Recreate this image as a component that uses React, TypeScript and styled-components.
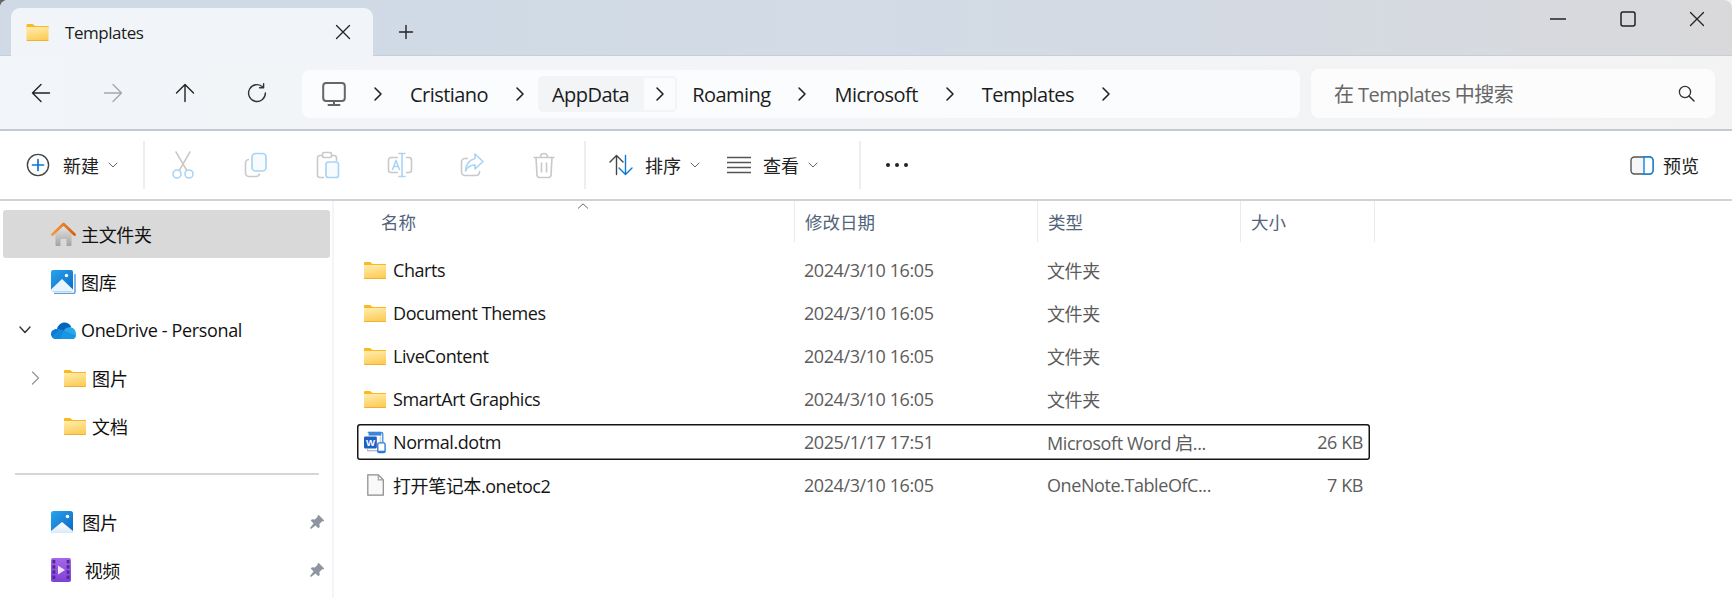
import React from "react";
import styled, { createGlobalStyle } from "styled-components";

const FONT = `"Open Sans", "Noto Sans CJK SC", sans-serif`;

const Global = createGlobalStyle`
  html, body { margin: 0; padding: 0; width: 1732px; height: 598px; overflow: hidden;
    background: linear-gradient(90deg, #666 50%, #f2f2f2 50%); }
  * { box-sizing: border-box; }
`;

const Win = styled.div`
  width: 1732px; height: 598px; overflow: hidden; display: flex; flex-direction: column;
  border-radius: 8px 8px 0 0; background: #fff; font-family: ${FONT}; color: #1a1a1a;
`;

/* ---------- title bar ---------- */
const TitleBar = styled.header`
  height: 56px; flex: none; display: flex; align-items: flex-end; padding-left: 11px;
  background: linear-gradient(90deg, #cfdae6 0%, #d2dbe6 50%, #d5dae2 75%, #d9d9db 100%);
  border-bottom: 1px solid #c6ced8;
`;
const Tab = styled.div`
  width: 362px; height: 48px; margin-bottom: -1px; display: flex; align-items: center; padding: 0 22px 0 15px;
  background: #f1f5f9; border-radius: 9px 9px 0 0; position: relative;
`;
const TabLabel = styled.span`
  margin-left: 16px; font-size: 17px; font-weight: 500; letter-spacing: -0.45px; flex: 1; color: #1c1c1c;
`;
const NewTab = styled.div`
  width: 66px; height: 47px; display: flex; align-items: center; justify-content: center; margin-left: 0;
`;
const WinControls = styled.div`
  margin-left: auto; align-self: flex-start; display: flex; height: 38px; padding-right: 0;
`;
const WinBtn = styled.div`
  width: 69.5px; display: flex; align-items: center; justify-content: center;
`;

/* ---------- nav bar ---------- */
const NavBar = styled.nav`
  height: 75px; flex: none; display: flex; align-items: flex-start; padding: 13px 17px 0 5px;
  background: linear-gradient(90deg, #f2f5f9, #f3f3f4);
  border-bottom: 2px solid #c4c9d0;
`;
const NavBtn = styled.div`
  width: 72px; height: 48px; display: flex; align-items: center; justify-content: center;
`;
const Address = styled.div`
  margin-left: 9px; margin-top: 1px; width: 998px; height: 48px; display: flex; align-items: center; padding-left: 20px;
  background: #fbfcfd; border-radius: 8px; font-size: 20px; letter-spacing: -0.55px;
`;
const Crumb = styled.span`
  color: #1c1c1c; white-space: nowrap;
`;
const Sep = styled.span`
  display: flex; width: 10px; margin: 0 27px;
`;
const ActiveCrumb = styled.div`
  display: flex; align-items: stretch; height: 36px; margin-left: -14px; margin-right: 15px;
`;
const ActiveLabel = styled.span`
  display: flex; align-items: center; padding: 0 15px 0 14px; background: #f2f4f6; border-radius: 5px 0 0 5px; color: #1c1c1c;
`;
const ActiveChevron = styled.span`
  display: flex; align-items: center; justify-content: center; width: 33px;
  background: #fbfcfd; border: 2px solid #f2f4f6; border-left: none; border-radius: 0 5px 5px 0;
`;
const Search = styled.div`
  margin-left: 11px; width: 404px; height: 49px; display: flex; align-items: center; padding: 0 20px 0 23px;
  background: #fcfcfc; border-radius: 8px; font-size: 20px; color: #666; letter-spacing: -0.55px;
`;
const SearchText = styled.span`flex: 1; white-space: nowrap;`;

/* ---------- command bar ---------- */
const CommandBar = styled.div`
  height: 70px; flex: none; display: flex; align-items: center; background: #fff;
  border-bottom: 2px solid #cfd2d6; padding-right: 33px;
`;
const Cmd = styled.div<{ $w: number }>`
  width: ${(p) => p.$w}px; height: 48px; display: flex; align-items: center; justify-content: center; flex: none;
`;
const LabelCmd = styled.div<{ $pl: number; $w: number }>`
  width: ${(p) => p.$w}px; padding-left: ${(p) => p.$pl}px; height: 48px; display: flex; align-items: center; flex: none; font-size: 18px; color: #222;
`;
const CmdText = styled.span<{ $ml: number }>`
  margin-left: ${(p) => p.$ml}px;
`;
const Caret = styled.span<{ $ml: number }>`
  margin-left: ${(p) => p.$ml}px; display: flex;
`;
const VRule = styled.div`
  width: 2px; height: 48px; background: #eeeeee; flex: none;
`;
const Preview = styled.div`
  margin-left: auto; display: flex; align-items: center; font-size: 18px; color: #222; gap: 9px;
`;

/* ---------- body ---------- */
const Body = styled.main`
  flex: 1; display: flex; min-height: 0;
`;
const Sidebar = styled.aside`
  width: 334px; flex: none; padding: 9px 0 0 3px; border-right: 2px solid #f4f5f7; background: #fff;
`;
const NavRow = styled.div<{ $active?: boolean }>`
  width: 327px; height: 48px; display: flex; align-items: center; font-size: 18px; color: #111;
  border-radius: 3px; background: ${(p) => (p.$active ? "#d9d9d9" : "transparent")};
  letter-spacing: -0.35px;
`;
const Indent = styled.span<{ $deep?: boolean }>`
  flex: none; display: flex; align-items: center; width: ${(p) => (p.$deep ? 61 : 48)}px;
  padding-left: ${(p) => (p.$deep ? 28 : 16)}px;
`;
const NavLabel = styled.span<{ $deep?: boolean }>`
  margin-left: ${(p) => (p.$deep ? 6 : 5)}px; letter-spacing: ${(p) => (p.$deep ? 0 : "inherit")};
`;
const Pin = styled.span`
  margin-left: auto; margin-right: 5px; display: flex;
`;
const Divider = styled.div`
  width: 304px; height: 2px; margin: 23px 0 23px 12px; background: #d6d6d6;
`;
const List = styled.section`flex: 1; min-width: 0;`;
const HeadRow = styled.div`
  height: 41px; display: grid; grid-template-columns: 460px 243px 203px 135px; width: 1041px;
  font-size: 17.5px; color: #52637a; position: relative; border-right: 1px solid #ebebeb;
`;
const HeadCell = styled.div<{ $first?: boolean }>`
  display: flex; align-items: center; padding-left: ${(p) => (p.$first ? 47 : 10)}px;
  border-left: ${(p) => (p.$first ? "none" : "1px solid #ebebeb")};
  position: relative;
`;
const SortCaret = styled.span`
  position: absolute; left: 243px; top: 2px; display: flex;
`;
const Rows = styled.div`padding-top: 10px; display: flex; flex-direction: column; gap: 7px;`;
const FileRow = styled.div<{ $sel?: boolean }>`
  margin-left: 23px; width: 1013px; height: 36px; display: grid; grid-template-columns: 437px 243px 203px 130px;
  align-items: center; border-radius: 3px; font-size: 18px;
  box-shadow: ${(p) => (p.$sel ? "inset 0 0 0 1.5px #151515" : "none")};
`;
const NameCell = styled.div`
  display: flex; align-items: center; padding-left: 7px; gap: 7px; color: #151515; letter-spacing: -0.42px; white-space: nowrap;
`;
const IconSlot = styled.span`
  width: 22px; display: flex; justify-content: center; flex: none;
`;
const DataCell = styled.div<{ $right?: boolean }>`
  padding: ${(p) => (p.$right ? "0 7px 0 0" : "0 0 0 10px")}; text-align: ${(p) => (p.$right ? "right" : "left")};
  color: #5c5c5c; letter-spacing: -0.42px; white-space: nowrap;
`;

/* ---------- icons ---------- */
const Stroke = { fill: "none", strokeLinecap: "round", strokeLinejoin: "round" } as const;

const Folder = ({ w = 22 }: { w?: number }) => (
  <svg width={w} height={17} viewBox="0 0 22 17">
    <defs>
      <linearGradient id="fo" x1="0" y1="0" x2="0.3" y2="1">
        <stop offset="0" stopColor="#ffeeb0" />
        <stop offset="1" stopColor="#fdcd5c" />
      </linearGradient>
    </defs>
    <path d="M0 1a1 1 0 0 1 1-1h5l2.6 2H22v3H0z" fill="#fbb91f" />
    <path d="M0 3h21.2a.8.8 0 0 1 .8.8V16a1 1 0 0 1-1 1H1a1 1 0 0 1-1-1z" fill="url(#fo)" />
    <path d="M0 16h22v.2a.8.8 0 0 1-.8.8H.8a.8.8 0 0 1-.8-.8z" fill="#efb22e" />
  </svg>
);

const Chevron = ({ c = "#222" }: { c?: string }) => (
  <svg width="10" height="16" viewBox="0 0 10 16">
    <path d="M2 2l6 6-6 6" stroke={c} strokeWidth="1.6" {...Stroke} />
  </svg>
);
const Down = ({ c = "#666" }: { c?: string }) => (
  <svg width="10" height="6" viewBox="0 0 10 6">
    <path d="M1 1l4 4 4-4" stroke={c} strokeWidth="1" {...Stroke} />
  </svg>
);
const Arrow = ({ dir, c = "#222" }: { dir: "l" | "r" | "u"; c?: string }) => {
  const rot = dir === "l" ? 0 : dir === "r" ? 180 : 90;
  return (
    <svg width="20" height="20" viewBox="0 0 20 20" style={{ transform: `rotate(${rot}deg)` }}>
      <path d="M1.5 10h17M10 1.5L1.5 10l8.5 8.5" stroke={c} strokeWidth="1.4" {...Stroke} />
    </svg>
  );
};
const Refresh = () => (
  <svg width="20" height="20" viewBox="0 0 20 20">
    <path d="M15.8 4A8.4 8.4 0 1 0 18.4 10" stroke="#333" strokeWidth="1.4" {...Stroke} />
    <path d="M16.6 0.8V4.8H12.6" stroke="#333" strokeWidth="1.4" {...Stroke} />
  </svg>
);
const Monitor = () => (
  <svg width="24" height="24" viewBox="0 0 24 24">
    <rect x="1.2" y="1" width="21.6" height="18" rx="3" fill="#fbfcfd" stroke="#666" strokeWidth="2" />
    <path d="M12 19v3.5M6.5 23h11" stroke="#666" strokeWidth="2" {...Stroke} />
  </svg>
);
const Plus = () => (
  <svg width="16" height="16" viewBox="0 0 16 16">
    <path d="M8 1.5v13M1.5 8h13" stroke="#222" strokeWidth="1.4" strokeLinecap="round" />
  </svg>
);
const Cross = ({ s = 16 }: { s?: number }) => (
  <svg width={s} height={s} viewBox="0 0 16 16">
    <path d="M1.5 1.5l13 13M14.5 1.5l-13 13" stroke="#222" strokeWidth="1.3" strokeLinecap="round" />
  </svg>
);
const Minimize = () => (
  <svg width="16" height="16" viewBox="0 0 16 16"><path d="M0 8h16" stroke="#222" strokeWidth="1.3" /></svg>
);
const Maximize = () => (
  <svg width="16" height="16" viewBox="0 0 16 16">
    <rect x="1" y="1" width="14" height="14" rx="2" fill="none" stroke="#222" strokeWidth="1.5" />
  </svg>
);
const SearchIcon = () => (
  <svg width="17" height="17" viewBox="0 0 17 17">
    <circle cx="7" cy="7" r="5.6" fill="none" stroke="#333" strokeWidth="1.3" />
    <path d="M11 11l5 5" stroke="#333" strokeWidth="1.5" strokeLinecap="round" />
  </svg>
);
const NewIcon = () => (
  <svg width="24" height="24" viewBox="0 0 24 24">
    <circle cx="12" cy="12" r="10.6" fill="#fff" stroke="#444" strokeWidth="1.4" />
    <path d="M12 6.5v11M6.5 12h11" stroke="#0a78d4" strokeWidth="1.7" strokeLinecap="round" />
  </svg>
);
const G = "#c9c9c9";
const B = "#a9d4f5";
const CutIcon = () => (
  <svg width="24" height="28" viewBox="0 0 24 28">
    <path d="M5 1l10.5 18M19 1L8.5 19" stroke={G} strokeWidth="1.5" {...Stroke} />
    <circle cx="6" cy="23" r="4" fill="none" stroke={B} strokeWidth="1.6" />
    <circle cx="18" cy="23" r="4" fill="none" stroke={B} strokeWidth="1.6" />
  </svg>
);
const CopyIcon = () => (
  <svg width="24" height="26" viewBox="0 0 24 26">
    <path d="M5 7.5A3.5 3.5 0 0 0 1.5 11v10A3.5 3.5 0 0 0 5 24.5h7a3.5 3.5 0 0 0 3.5-3" fill="none" stroke={G} strokeWidth="1.6" />
    <rect x="8" y="1.5" width="14" height="17.5" rx="3.5" fill="#f7fbfe" stroke={B} strokeWidth="1.7" />
  </svg>
);
const PasteIcon = () => (
  <svg width="24" height="28" viewBox="0 0 24 28">
    <path d="M6 4.5H4A2.5 2.5 0 0 0 1.5 7v17A2.5 2.5 0 0 0 4 26.5h4M16 4.5h2A2.5 2.5 0 0 1 20.5 7v3" fill="none" stroke={G} strokeWidth="1.6" />
    <rect x="6.5" y="1.5" width="9" height="5" rx="1.5" fill="#fff" stroke={G} strokeWidth="1.6" />
    <rect x="10" y="11" width="12.5" height="15.5" rx="2.5" fill="#f7fbfe" stroke={B} strokeWidth="1.7" />
  </svg>
);
const RenameIcon = () => (
  <svg width="26" height="26" viewBox="0 0 26 26">
    <path d="M11 5.5H4A2.5 2.5 0 0 0 1.5 8v10A2.5 2.5 0 0 0 4 20.5h7M19 5.5h3A2.5 2.5 0 0 1 24.500 8v10a2.500 2.500 0 0 1-2.500 2.500h-3" fill="none" stroke={G} strokeWidth="1.6" />
    <path d="M15 1.500v23M12 1.500h6M12 24.500h6" stroke={B} strokeWidth="1.6" strokeLinecap="round" />
    <path d="M5.500 17.500L9 8.500l3.500 9M6.700 14.500h4.600" fill="none" stroke={B} strokeWidth="1.5" {...Stroke} />
  </svg>
);
const ShareIcon = () => (
  <svg width="24" height="26" viewBox="0 0 24 26">
    <path d="M8 6.500H5A3.500 3.500 0 0 0 1.500 10v10A3.500 3.500 0 0 0 5 23.500h11a3.500 3.500 0 0 0 3.500-3V19" fill="none" stroke={G} strokeWidth="1.6" />
    <path d="M15 2l8 7.500-8 7.500v-4C10.500 13 7.500 14.500 5.500 19c.3-6.500 3.500-11 9.500-12.500z" fill="#f7fbfe" stroke={B} strokeWidth="1.6" {...Stroke} />
  </svg>
);
const TrashIcon = () => (
  <svg width="22" height="27" viewBox="0 0 22 27">
    <path d="M1 5.500h20M7.500 5.500C7.500 2 9 1.500 11 1.500s3.500.5 3.500 4" fill="none" stroke={G} strokeWidth="1.6" {...Stroke} />
    <path d="M3 5.500l1 18a2.500 2.500 0 0 0 2.500 2h9a2.500 2.500 0 0 0 2.500-2l1-18" fill="none" stroke={G} strokeWidth="1.6" />
    <path d="M8.500 11v9M13.500 11v9" stroke={G} strokeWidth="1.6" strokeLinecap="round" />
  </svg>
);
const SortIcon = () => (
  <svg width="24" height="22" viewBox="0 0 24 22">
    <path d="M7.500 20.500v-19M1 8l6.500-6.500L14 8" stroke="#444" strokeWidth="1.4" {...Stroke} />
    <path d="M16.500 1.500v19M10 14l6.500 6.500L23 14" stroke="#0a78d4" strokeWidth="1.4" {...Stroke} />
  </svg>
);
const ViewIcon = () => (
  <svg width="24" height="18" viewBox="0 0 24 18">
    <path d="M0 1.500h24M0 6.500h24M0 11.500h24M0 16.500h24" stroke="#555" strokeWidth="1.4" />
  </svg>
);
const Dots = () => (
  <svg width="24" height="6" viewBox="0 0 24 6">
    <circle cx="3" cy="3" r="2" fill="#222" /><circle cx="12" cy="3" r="2" fill="#222" /><circle cx="21" cy="3" r="2" fill="#222" />
  </svg>
);
const PreviewIcon = () => (
  <svg width="24" height="19" viewBox="0 0 24 19">
    <rect x="1" y="1" width="22" height="17" rx="3.500" fill="#f6f6f6" stroke="#555" strokeWidth="1.400" />
    <path d="M14 1h5.500A3.500 3.500 0 0 1 23 4.500v10a3.500 3.500 0 0 1-3.500 3.500H14z" fill="#fff" stroke="#0a84e0" strokeWidth="1.400" />
  </svg>
);
const SortUp = () => (
  <svg width="12" height="6" viewBox="0 0 12 6">
    <path d="M1 5.500L6 .8l5 4.700" fill="none" stroke="#666" strokeWidth="1" />
  </svg>
);
const HomeIcon = () => (
  <svg width="25" height="24" viewBox="0 0 25 24">
    <defs>
      <linearGradient id="hb" x1="0" y1="0" x2="0" y2="1">
        <stop offset="0" stopColor="#e4e4e4" /><stop offset="1" stopColor="#a3a3a3" />
      </linearGradient>
      <linearGradient id="hr" x1="0" y1="0" x2="1" y2="0">
        <stop offset="0" stopColor="#f29a45" /><stop offset="1" stopColor="#d9600c" />
      </linearGradient>
    </defs>
    <path d="M4.500 11.500L12.500 4l8 7.500V23a1 1 0 0 1-1 1H15.500v-7h-6v7H5.500a1 1 0 0 1-1-1z" fill="url(#hb)" />
    <path d="M1.500 12.500L12.500 2l11 10.500" fill="none" stroke="url(#hr)" strokeWidth="2.800" strokeLinecap="round" strokeLinejoin="round" />
  </svg>
);
const GalleryIcon = () => (
  <svg width="25" height="24" viewBox="0 0 25 24">
    <defs>
      <linearGradient id="gl" x1="0" y1="0" x2="1" y2="1">
        <stop offset="0" stopColor="#27a5ec" /><stop offset="1" stopColor="#0c68c6" />
      </linearGradient>
    </defs>
    <path d="M3 23.500h19a2 2 0 0 0 2-2V4" fill="none" stroke="#5d9fdc" strokeWidth="1.500" />
    <rect x="0" y="0" width="22" height="21.500" rx="2" fill="url(#gl)" />
    <path d="M0 19.500L11 9l11 10.500v.5a1.500 1.500 0 0 1-1.500 1.500h-19A1.500 1.500 0 0 1 0 20z" fill="#e9f4fd" />
    <circle cx="15.500" cy="5.500" r="1.700" fill="#fff" />
  </svg>
);
const PictureIcon = () => (
  <svg width="22" height="22" viewBox="0 0 22 22">
    <defs>
      <linearGradient id="pc" x1="0" y1="0" x2="1" y2="1">
        <stop offset="0" stopColor="#26a6ee" /><stop offset="1" stopColor="#0d63c2" />
      </linearGradient>
      <linearGradient id="pw" x1="0" y1="0" x2="0" y2="1">
        <stop offset="0" stopColor="#fff" /><stop offset="1" stopColor="#dbe9f7" />
      </linearGradient>
    </defs>
    <rect width="22" height="22" rx="2.500" fill="url(#pc)" />
    <path d="M0 20L11 11l11 9v.5A1.500 1.500 0 0 1 20.500 22h-19A1.500 1.500 0 0 1 0 20.500z" fill="url(#pw)" />
    <circle cx="16.500" cy="5.500" r="1.800" fill="#fff" />
  </svg>
);
const VideoIcon = () => (
  <svg width="20" height="24" viewBox="0 0 20 24">
    <defs>
      <linearGradient id="vd" x1="0" y1="0" x2="0" y2="1">
        <stop offset="0" stopColor="#a766e8" /><stop offset="1" stopColor="#7f3fd6" />
      </linearGradient>
    </defs>
    <rect width="20" height="24" rx="2" fill="url(#vd)" />
    {[2, 7.2, 12.4, 17.6].map((y) => (
      <g key={y} fill="#4d2a97">
        <rect x="1.500" y={y} width="2.800" height="3.400" />
        <rect x="15.700" y={y} width="2.800" height="3.400" />
      </g>
    ))}
    <path d="M7 7.500v9l7-4.500z" fill="#ece4fb" />
  </svg>
);
const OneDriveIcon = () => (
  <svg width="25" height="17" viewBox="0 0 25 17">
    <path d="M6 7C7 3 10 .5 13.500.5c3 0 5.500 1.500 6.800 4.500L13 10z" fill="#0364b8" />
    <path d="M6 7c-3.500-.3-6 2.200-6 5s2 5 5 5h4l7-7z" fill="#0f78d4" />
    <path d="M20.300 5.500C17.500 5 15 6 13.500 7.500L9 17h12.500c2 0 3.500-1.800 3.500-4.500 0-4-2-6.500-4.700-7z" fill="#28a8ea" />
    <path d="M9 7l16 6.500c-.2 2-1.500 3.500-3.500 3.500H5c-1.500 0-3-.6-3.900-2z" fill="#1490df" opacity="0.75" />
  </svg>
);
const PinIcon = () => (
  <svg width="16" height="16" viewBox="0 0 16 16">
    <path d="M9.500.8l5.700 5.700-1.100 1.100-.9-.3-2.800 2.800.3 2.900-1.300 1.300-2.900-2.900L2 15l-1-1 3.600-4.500L1.700 6.600 3 5.300l2.900.3 2.800-2.800-.3-.9z" fill="#8d969e" />
  </svg>
);
const WordIcon = () => (
  <svg width="24" height="24" viewBox="0 0 24 24">
    <path d="M4 1.500h15a1.500 1.500 0 0 1 1.500 1.500v10" fill="none" stroke="#3f8fdc" strokeWidth="1.400" />
    <path d="M4 20v1.500h11" fill="none" stroke="#9aa5b0" strokeWidth="1.200" />
    <path d="M5 1h14v4H5z" fill="#3a86d8" />
    <path d="M17 6h2v8h-2z" fill="#cfd6dd" />
    <rect x="0" y="6" width="14" height="13" rx="1.200" fill="#1f5fc4" />
    <text x="7" y="16.500" textAnchor="middle" fontFamily="Liberation Sans" fontWeight="700" fontSize="10.500" fill="#fff">W</text>
    <rect x="15" y="13" width="8" height="10.500" rx="1.500" fill="#fff" stroke="#2b7cd6" strokeWidth="1.500" />
    <path d="M15 21.500h8v1a1 1 0 0 1-1 1h-6a1 1 0 0 1-1-1z" fill="#2b7cd6" />
  </svg>
);
const FileIcon = () => (
  <svg width="17" height="22" viewBox="0 0 17 22">
    <path d="M.8.800h10.500l5 5v15.400H.8z" fill="#f9f9f9" stroke="#8a8a8a" strokeWidth="1.200" />
    <path d="M11.300.800v5h5" fill="none" stroke="#a0a0a0" strokeWidth="1.200" />
  </svg>
);

/* ---------- data ---------- */
type F = { name: string; date: string; type: string; size?: string; icon: React.ReactNode; sel?: boolean };
const files: F[] = [
  { name: "Charts", date: "2024/3/10 16:05", type: "文件夹", icon: <Folder /> },
  { name: "Document Themes", date: "2024/3/10 16:05", type: "文件夹", icon: <Folder /> },
  { name: "LiveContent", date: "2024/3/10 16:05", type: "文件夹", icon: <Folder /> },
  { name: "SmartArt Graphics", date: "2024/3/10 16:05", type: "文件夹", icon: <Folder /> },
  { name: "Normal.dotm", date: "2025/1/17 17:51", type: "Microsoft Word 启...", size: "26 KB", icon: <WordIcon />, sel: true },
  { name: "打开笔记本.onetoc2", date: "2024/3/10 16:05", type: "OneNote.TableOfC...", size: "7 KB", icon: <FileIcon /> },
];

export default function App() {
  return (
    <Win>
      <Global />
      <TitleBar>
        <Tab>
          <Folder w={23} />
          <TabLabel>Templates</TabLabel>
          <Cross />
        </Tab>
        <NewTab><Plus /></NewTab>
        <WinControls>
          <WinBtn><Minimize /></WinBtn>
          <WinBtn><Maximize /></WinBtn>
          <WinBtn><Cross /></WinBtn>
        </WinControls>
      </TitleBar>

      <NavBar>
        <NavBtn><Arrow dir="l" /></NavBtn>
        <NavBtn><Arrow dir="r" c="#a8a8a8" /></NavBtn>
        <NavBtn><Arrow dir="u" /></NavBtn>
        <NavBtn><Refresh /></NavBtn>
        <Address>
          <Monitor />
          <Sep><Chevron /></Sep>
          <Crumb>Cristiano</Crumb>
          <Sep><Chevron /></Sep>
          <ActiveCrumb>
            <ActiveLabel>AppData</ActiveLabel>
            <ActiveChevron><Chevron /></ActiveChevron>
          </ActiveCrumb>
          <Crumb>Roaming</Crumb>
          <Sep><Chevron /></Sep>
          <Crumb>Microsoft</Crumb>
          <Sep><Chevron /></Sep>
          <Crumb>Templates</Crumb>
          <Sep><Chevron /></Sep>
        </Address>
        <Search>
          <SearchText>在 Templates 中搜索</SearchText>
          <SearchIcon />
        </Search>
      </NavBar>

      <CommandBar>
        <LabelCmd $w={143} $pl={26}>
          <NewIcon />
          <CmdText $ml={13}>新建</CmdText>
          <Caret $ml={9}><Down /></Caret>
        </LabelCmd>
        <VRule />
        <Cmd $w={75}><CutIcon /></Cmd>
        <Cmd $w={72}><CopyIcon /></Cmd>
        <Cmd $w={72}><PasteIcon /></Cmd>
        <Cmd $w={72}><RenameIcon /></Cmd>
        <Cmd $w={72}><ShareIcon /></Cmd>
        <Cmd $w={72}><TrashIcon /></Cmd>
        <Cmd $w={4} />
        <VRule />
        <LabelCmd $w={135} $pl={23}>
          <SortIcon />
          <CmdText $ml={12}>排序</CmdText>
          <Caret $ml={9}><Down /></Caret>
        </LabelCmd>
        <LabelCmd $w={138} $pl={6}>
          <ViewIcon />
          <CmdText $ml={12}>查看</CmdText>
          <Caret $ml={9}><Down /></Caret>
        </LabelCmd>
        <VRule />
        <Cmd $w={72}><Dots /></Cmd>
        <Preview><PreviewIcon />预览</Preview>
      </CommandBar>

      <Body>
        <Sidebar>
          <NavRow $active>
            <Indent /><HomeIcon /><NavLabel>主文件夹</NavLabel>
          </NavRow>
          <NavRow>
            <Indent /><GalleryIcon /><NavLabel>图库</NavLabel>
          </NavRow>
          <NavRow>
            <Indent>
              <svg width="12" height="8" viewBox="0 0 12 8"><path d="M1 1l5 5.500L11 1" fill="none" stroke="#333" strokeWidth="1.400" strokeLinecap="round" strokeLinejoin="round" /></svg>
            </Indent>
            <OneDriveIcon /><NavLabel>OneDrive - Personal</NavLabel>
          </NavRow>
          <NavRow>
            <Indent $deep>
              <svg width="9" height="14" viewBox="0 0 9 14"><path d="M1.500 1l6 6-6 6" fill="none" stroke="#999" strokeWidth="1.400" strokeLinecap="round" strokeLinejoin="round" /></svg>
            </Indent>
            <Folder /><NavLabel $deep>图片</NavLabel>
          </NavRow>
          <NavRow>
            <Indent $deep /><Folder /><NavLabel $deep>文档</NavLabel>
          </NavRow>
          <Divider />
          <NavRow>
            <Indent /><PictureIcon /><NavLabel>&nbsp;图片</NavLabel><Pin><PinIcon /></Pin>
          </NavRow>
          <NavRow>
            <Indent /><VideoIcon /><NavLabel>&nbsp;&nbsp;视频</NavLabel><Pin><PinIcon /></Pin>
          </NavRow>
        </Sidebar>

        <List>
          <HeadRow>
            <HeadCell $first>名称<SortCaret><SortUp /></SortCaret></HeadCell>
            <HeadCell>修改日期</HeadCell>
            <HeadCell>类型</HeadCell>
            <HeadCell>大小</HeadCell>
          </HeadRow>
          <Rows>
            {files.map((f) => (
              <FileRow key={f.name} $sel={f.sel}>
                <NameCell><IconSlot>{f.icon}</IconSlot>{f.name}</NameCell>
                <DataCell>{f.date}</DataCell>
                <DataCell>{f.type}</DataCell>
                <DataCell $right>{f.size}</DataCell>
              </FileRow>
            ))}
          </Rows>
        </List>
      </Body>
    </Win>
  );
}
